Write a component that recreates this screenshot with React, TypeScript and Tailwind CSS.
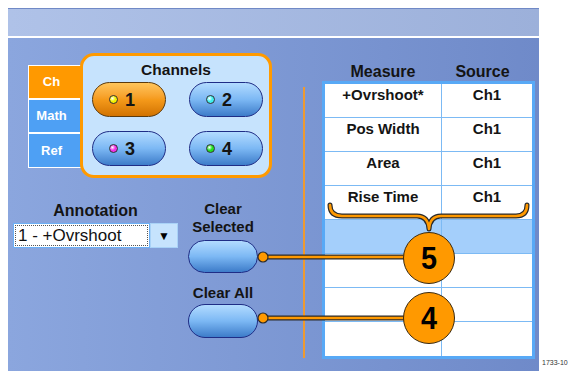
import React from "react";

const font = "font-['Liberation_Sans',Arial,sans-serif]";

function Dot({ color }: { color: string }) {
  return (
    <span
      className="inline-block w-[9px] h-[9px] rounded-full border border-[#333] shrink-0"
      style={{ background: `radial-gradient(circle at 35% 35%, #ffffff 0%, ${color} 45%, ${color} 100%)` }}
    />
  );
}

function ChanButton({ n, color, active }: { n: string; color: string; active?: boolean }) {
  return (
    <div
      className={
        "h-[35px] rounded-[18px] border-[1.5px] flex items-center justify-center gap-[7px] pr-[14px] " +
        (active
          ? "bg-linear-to-b from-[#ffc55a] via-[#f59a1a] to-[#d27300] border-[#5c3a0c]"
          : "bg-linear-to-b from-[#b2dbff] via-[#7cb8f4] to-[#3d7cc9] border-[#1f2d86]")
      }
    >
      <Dot color={color} />
      <span className="text-[18px] font-bold text-[#141414] leading-none">{n}</span>
    </div>
  );
}

function BlueButton({ h }: { h: string }) {
  return (
    <div
      className={
        "w-[70px] rounded-[17px] border-[1.5px] border-[#1f2d86] bg-linear-to-b from-[#b2dbff] via-[#7cb8f4] to-[#3d7cc9] " +
        h
      }
    />
  );
}

const rows: [string, string][] = [
  ["+Ovrshoot*", "Ch1"],
  ["Pos Width", "Ch1"],
  ["Area", "Ch1"],
  ["Rise Time", "Ch1"],
  ["", ""],
  ["", ""],
  ["", ""],
  ["", ""],
];

export default function App() {
  return (
    <div className={"w-[573px] h-[371px] bg-white flex relative overflow-hidden " + font}>
      <div className="ml-[8px] mt-[8px] w-[531px] flex flex-col">
        <div className="h-[28px] bg-linear-to-r from-[#afc2e8] to-[#9cb0da] border-t border-[#7089c6]" />
        <div className="h-[2px] bg-white" />
        <div className="h-[333px] bg-linear-to-r from-[#8ba6de] to-[#6f8ac9] flex">
          {/* Left section */}
          <div className="w-[288px] flex flex-col pl-[5px] pt-[15px]">
            <div className="flex ml-[15px] items-start">
              <div className="mt-[12px] w-[54px] flex flex-col border-l border-t border-white">
                <div className="h-[34px] bg-[#ff9900] border-b-2 border-white flex items-center justify-center pr-[8px] text-white text-[13px] font-bold">
                  Ch
                </div>
                <div className="h-[34px] bg-[#4ea0f4] border-b-2 border-white flex items-center justify-center pr-[8px] text-white text-[13px] font-bold">
                  Math
                </div>
                <div className="h-[34px] bg-[#4ea0f4] border-b border-white flex items-center justify-center pr-[8px] text-white text-[13px] font-bold">
                  Ref
                </div>
              </div>
              <div className="-ml-[2px] w-[192px] h-[125px] border-[3px] border-[#ff9a00] rounded-[14px] bg-[#c6e3fd] relative z-10 flex flex-col">
                <div className="h-[26px] flex items-center justify-center pt-[1px] text-[15.5px] font-bold text-[#141414]">
                  Channels
                </div>
                <div className="grid grid-cols-[74px_74px] gap-x-[23px] gap-y-[14px] pl-[9px]">
                  <ChanButton n="1" color="#f2f200" active />
                  <ChanButton n="2" color="#3ff0ee" />
                  <ChanButton n="3" color="#f032e6" />
                  <ChanButton n="4" color="#22e022" />
                </div>
              </div>
            </div>
            <div className="flex">
              <div className="w-[165px] flex flex-col mt-[24px]">
                <div className="h-[18px] leading-[18px] text-center text-[16px] font-bold text-[#141414]">Annotation</div>
                <div className="mt-[3px] flex h-[25px]">
                  <div className="w-[137px] h-[25px] border border-[#6cb0f6] bg-white p-[1px]">
                    <div className="h-full border border-dotted border-[#555] flex items-center pl-[2px] text-[17px] text-[#111] leading-none">
                      1 - +Ovrshoot
                    </div>
                  </div>
                  <div className="w-[28px] h-[25px] bg-[#c6e3fd] border border-[#a9d2f7] flex items-center justify-center text-[12px] text-black">
                    ▼
                  </div>
                </div>
              </div>
              <div className="ml-[10px] w-[70px] flex flex-col items-center mt-[22px]">
                <div className="h-[18px] leading-[18px] text-[15px] font-bold text-[#141414]">Clear</div>
                <div className="h-[18px] leading-[18px] text-[15px] font-bold text-[#141414]">Selected</div>
                <div className="mt-[4px]">
                  <BlueButton h="h-[33px]" />
                </div>
                <div className="mt-[11px] h-[18px] leading-[18px] text-[15px] font-bold text-[#141414]">Clear All</div>
                <div className="mt-[2px]">
                  <BlueButton h="h-[34px]" />
                </div>
              </div>
            </div>
          </div>
          {/* Orange divider */}
          <div className="ml-[7px] mt-[49px] w-[2px] h-[271px] bg-[#ee9a30]" />
          {/* Table */}
          <div className="ml-[17px] w-[213px] flex flex-col pt-[25px]">
            <div className="flex h-[18px] text-[16px] font-bold text-[#141414] leading-[18px]">
              <div className="w-[122px] text-center">Measure</div>
              <div className="flex-1 text-center pr-[14px]">Source</div>
            </div>
            <div className="border-[3px] border-[#58a9f6] bg-white flex flex-col">
              {rows.map((r, i) => (
                <div
                  key={i}
                  className={
                    "h-[34px] flex " +
                    (i < rows.length - 1 ? "border-b border-[#7cbaf4] " : "") +
                    (i === 4 ? "bg-[#a4cffb]" : "")
                  }
                >
                  <div className="w-[117px] border-r border-[#7cbaf4] text-center pt-[2px] text-[15px] font-bold leading-[18px] text-[#141414]">
                    {r[0]}
                  </div>
                  <div className="flex-1 text-center pt-[2px] text-[15px] font-bold leading-[18px] text-[#141414]">
                    {r[1]}
                  </div>
                </div>
              ))}
            </div>
          </div>
        </div>
      </div>
      <div className="self-end mb-[5px] ml-[3px] text-[7px] leading-none text-[#333]">1733-10</div>

      {/* Callouts overlay */}
      <svg className="absolute left-0 top-0 pointer-events-none" width="573" height="371" viewBox="0 0 573 371">
        <path
          d="M330,205 Q330,216 342,216 L417,216 Q428,216 429,229 Q430,216 441,216 L516,216 Q527,216 527,205"
          fill="none"
          stroke="#2a2a2a"
          strokeWidth="5"
          strokeLinecap="round"
          strokeLinejoin="round"
        />
        <path
          d="M330,205 Q330,216 342,216 L417,216 Q428,216 429,229 Q430,216 441,216 L516,216 Q527,216 527,205"
          fill="none"
          stroke="#ff9900"
          strokeWidth="2.6"
          strokeLinecap="round"
          strokeLinejoin="round"
        />
        <line x1="263" y1="257" x2="410" y2="257" stroke="#2a2a2a" strokeWidth="5" />
        <line x1="263" y1="257" x2="410" y2="257" stroke="#ff9900" strokeWidth="2.4" />
        <line x1="263" y1="318" x2="410" y2="318" stroke="#2a2a2a" strokeWidth="5" />
        <line x1="263" y1="318" x2="410" y2="318" stroke="#ff9900" strokeWidth="2.4" />
        <circle cx="263" cy="257" r="5" fill="#ff9900" stroke="#2a2a2a" strokeWidth="1.2" />
        <circle cx="263" cy="318" r="5" fill="#ff9900" stroke="#2a2a2a" strokeWidth="1.2" />
      </svg>
      <div className="absolute left-[403px] top-[232px] w-[52px] h-[52px] rounded-full bg-[#ff9900] border-[1.5px] border-[#3a2a10] flex items-center justify-center text-[32px] font-bold text-black leading-none">
        <span className="scale-x-90">5</span>
      </div>
      <div className="absolute left-[403px] top-[292px] w-[52px] h-[52px] rounded-full bg-[#ff9900] border-[1.5px] border-[#3a2a10] flex items-center justify-center text-[32px] font-bold text-black leading-none">
        <span className="scale-x-90">4</span>
      </div>
    </div>
  );
}
